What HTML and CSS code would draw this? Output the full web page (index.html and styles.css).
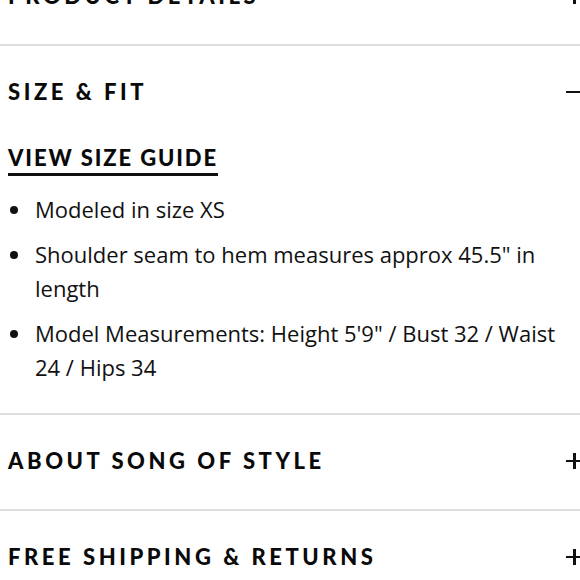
FILE: index.html
```html
<!DOCTYPE html>
<html>
<head>
<meta charset="utf-8">
<link rel="stylesheet" href="styles.css">
</head>
<body>
<div class="accordion">
  <section class="panel panel-first">
    <div class="panel-head">
      <span class="panel-title">PRODUCT DETAILS</span>
      <span class="icon icon-plus"></span>
    </div>
  </section>
  <section class="panel">
    <div class="panel-head">
      <span class="panel-title">SIZE &amp; FIT</span>
      <span class="icon icon-minus"></span>
    </div>
    <div class="panel-body">
      <a class="guide-link" href="#">VIEW SIZE GUIDE</a>
      <ul class="fit-list">
        <li>Modeled in size XS</li>
        <li>Shoulder seam to hem measures approx 45.5" in length</li>
        <li>Model Measurements: Height 5'9" / Bust 32 / Waist 24 / Hips 34</li>
      </ul>
    </div>
  </section>
  <section class="panel">
    <div class="panel-head">
      <span class="panel-title">ABOUT SONG OF STYLE</span>
      <span class="icon icon-plus"></span>
    </div>
  </section>
  <section class="panel">
    <div class="panel-head">
      <span class="panel-title">FREE SHIPPING &amp; RETURNS</span>
      <span class="icon icon-plus"></span>
    </div>
  </section>
</div>
</body>
</html>
```
FILE: styles.css
```css
html, body {
  margin: 0;
  padding: 0;
  background: #fff;
  overflow: hidden;
}
body {
  width: 580px;
  height: 580px;
  color: #111;
  font-family: "Lato", "Liberation Sans", sans-serif;
}
.accordion {
  margin-top: -50px;
}
.panel {
  border-bottom: 2px solid #dedede;
}
.panel-head {
  box-sizing: border-box;
  height: 94px;
  padding: 0 0 3px 8px;
  display: flex;
  align-items: center;
  justify-content: space-between;
}
.panel-title {
  font-weight: 900;
  font-size: 22px;
  letter-spacing: 3.55px;
  color: #0a0a0a;
  line-height: 1;
}
.icon {
  position: relative;
  width: 16px;
  height: 16px;
  margin-right: -2px;
  flex: none;
}
.icon::before,
.icon::after {
  content: "";
  position: absolute;
  background: #111;
}
.icon::before {
  left: 0;
  right: 0;
  top: 7px;
  height: 2.5px;
}
.icon-plus::after {
  top: 0;
  bottom: 0;
  left: 7px;
  width: 2.5px;
}
.panel-body {
  padding: 0 0 29px 8px;
}
.guide-link {
  display: inline-block;
  font-weight: 900;
  font-size: 22px;
  letter-spacing: 1.9px;
  color: #0a0a0a;
  text-decoration: none;
  border-bottom: 3px solid #111;
  line-height: 26px;
  padding-bottom: 2px;
  margin-top: 5px;
}
.fit-list {
  list-style: none;
  margin: 16px 0 0 0;
  padding: 0 14px 0 27px;
  font-family: "Open Sans", "Liberation Sans", sans-serif;
  font-size: 22px;
  line-height: 34px;
  color: #111;
}
.fit-list li {
  position: relative;
  margin-bottom: 11px;
}
.fit-list li:last-child {
  margin-bottom: 0;
}
.fit-list li::before {
  content: "";
  position: absolute;
  left: -25px;
  top: 14px;
  width: 8px;
  height: 8px;
  border-radius: 50%;
  background: #111;
}
```
